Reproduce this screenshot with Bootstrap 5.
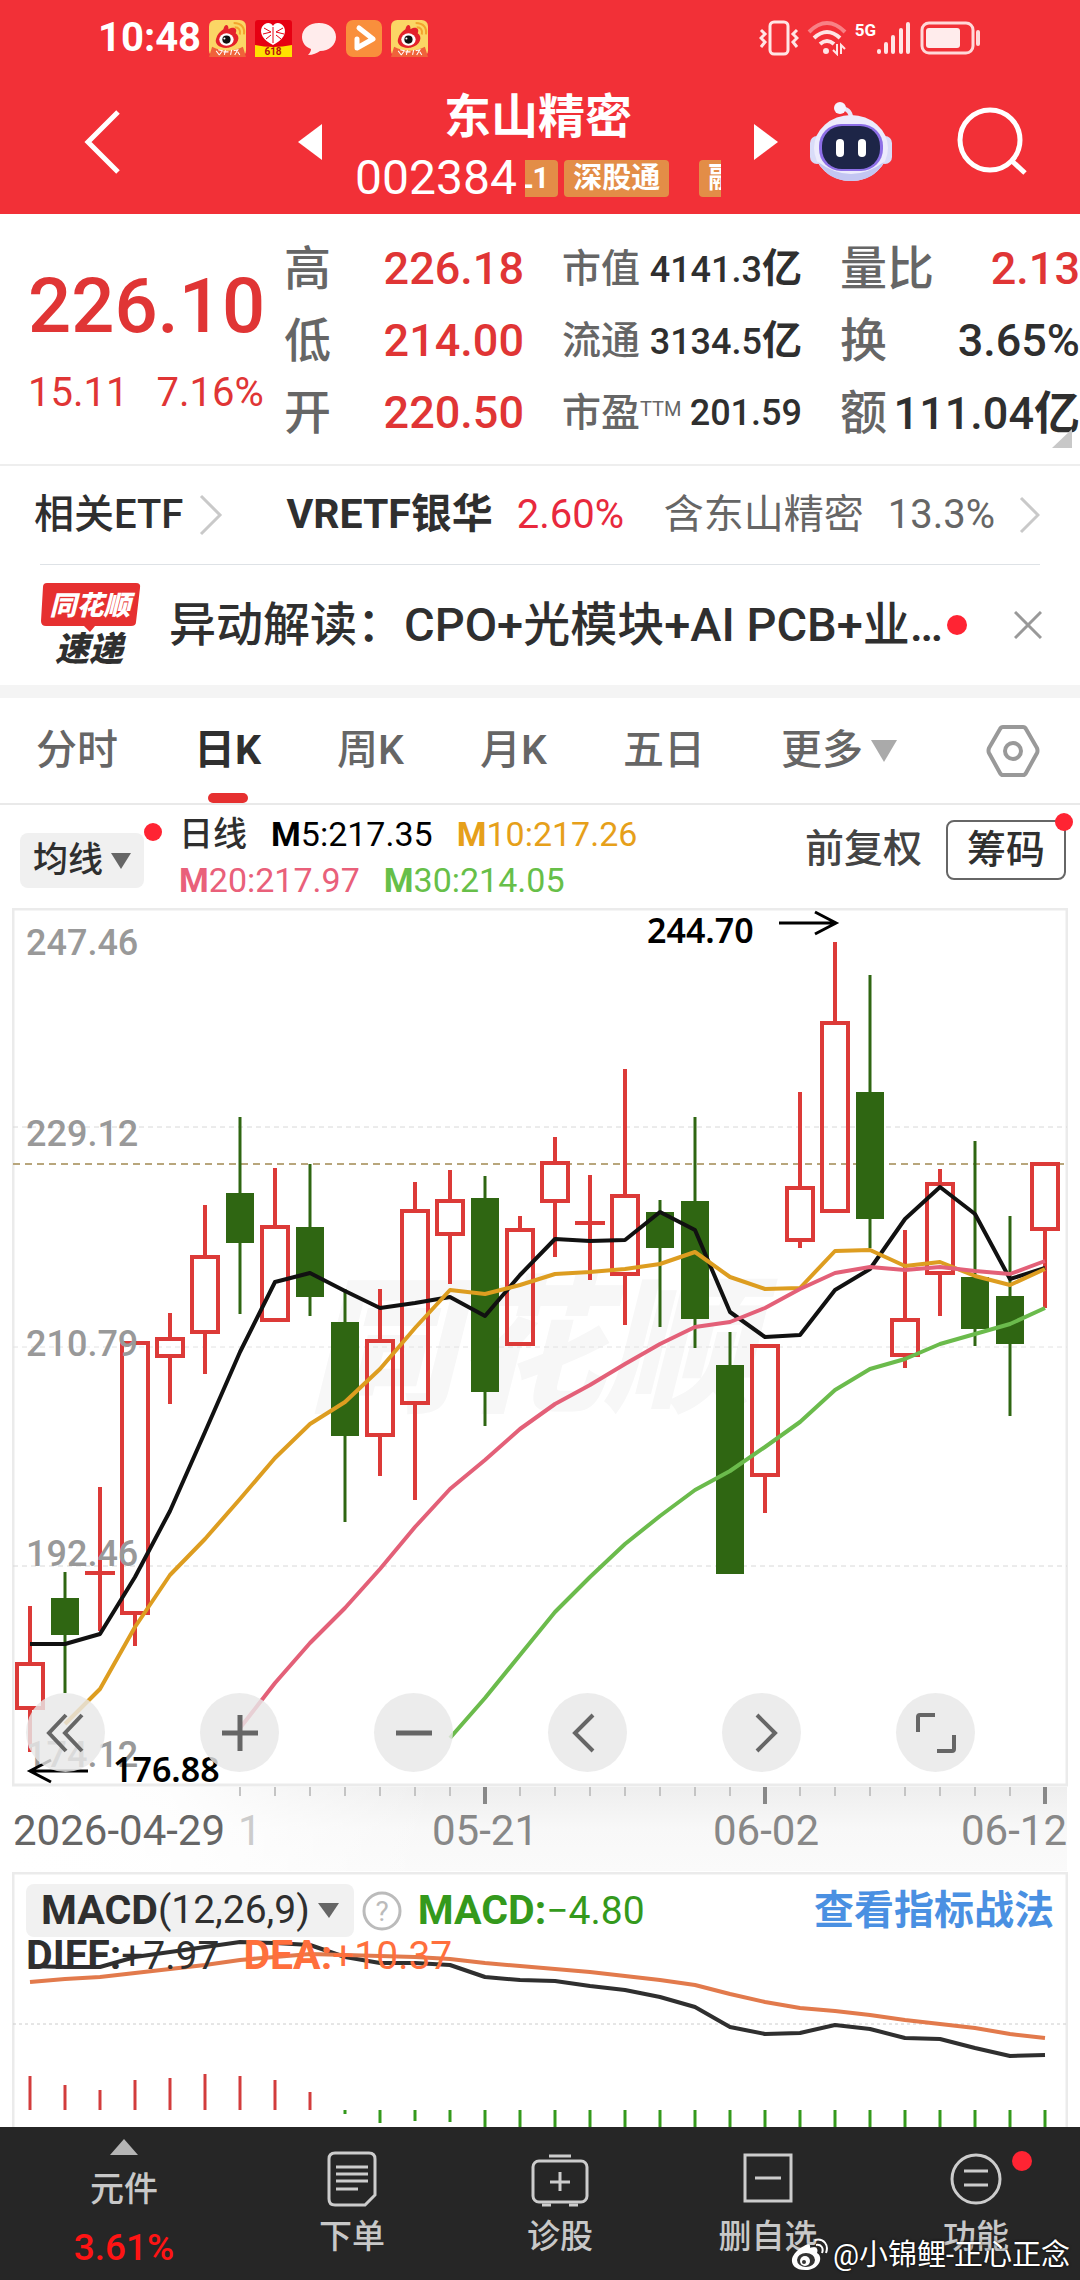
<!DOCTYPE html>
<html lang="zh-CN">
<head>
<meta charset="utf-8">
<meta name="viewport" content="width=device-width, initial-scale=1">
<title>东山精密 002384</title>
<link rel="stylesheet" href="https://cdn.jsdelivr.net/npm/bootstrap@5.3.0/dist/css/bootstrap.min.css">
<style>
:root{--up:#e03535;--ink:#2f2f2f;--dim:#666;--brand:#f23037}
body{font-family:Roboto,"Noto Sans CJK SC",sans-serif;color:var(--ink);background:#fff;line-height:1.2;overflow-x:hidden}
button{border:0;background:none;padding:0;color:inherit;font:inherit}
a{color:inherit;text-decoration:none}
svg{display:block;flex:none}
.up{color:var(--up)}.dim{color:var(--dim)}
.fw-5{font-weight:500}
.topbar{background:var(--brand);color:#fff}
.status{height:76px;padding:0 98px 0 98px;font-size:40px;font-weight:700;line-height:76px}
.status-apps{gap:9px}
.net5g{font-size:17px;line-height:18px;font-weight:700;height:34px}
.titlebar{height:138px;padding:0 52px 6px 82px}
.title-text{padding-top:16px}
.stock-title{font-size:47px;line-height:56px;font-weight:700}
.stock-code{font-size:48px;line-height:66px}
.tag-strip{width:196px;height:37px;gap:6px;overflow:hidden}
.tag{background:#e38d47;border-radius:4px;font-size:29px;line-height:37px;font-weight:700;padding:0 9px;flex:none}
.tag-cut{margin-left:-17px}
.pager{width:480px;margin-left:auto;margin-right:32px}
.robot{margin-right:64px}
.quote{display:grid;grid-template-columns:256fr 278fr 278fr 240fr;padding:19px 0 15px 28px;border-bottom:2px solid #eee}
.quote dl{margin:0;padding-right:38px}
.quote dl:last-of-type{padding-right:0}
.quote dl>div{height:72px;line-height:72px}
.quote dt{font-weight:500;color:var(--dim)}
.quote dd{margin:0;font-weight:500}
.c-lg{font-size:47px}.c-lg dd{font-size:45px}
.c-md{font-size:39px}.c-md dd{font-size:36px}
.price-cell{padding-top:28px}
.price{font-size:76px;line-height:90px;font-weight:500}
.change{font-size:40px;line-height:52px;gap:28px}
.unit{font-weight:700;font-size:40px}
.c-end .unit{font-size:46px}
.etf{height:98px;font-size:40px;padding:0 40px 0 34px}
.etf-name{margin-left:63px;font-weight:700;font-size:41px}
.news{height:120px;padding:0 38px 0 40px}
.headline{font-size:47px;font-weight:500;padding-left:3px}
.reddot{width:20px;height:20px;border-radius:50%;background:#ff2433;display:block;flex:none}
.strip{height:13px;background:#f4f4f4}
.tabs{height:107px;padding:0 40px 0 36px;border-bottom:2px solid #e9e9e9;font-size:41px;color:var(--dim);gap:76px;font-weight:500}
.tabs button{height:104px;position:relative}
.tabs .on{font-weight:700;color:var(--ink)}
.tabs .on::after{content:"";position:absolute;left:50%;bottom:0;width:40px;height:10px;margin-left:-20px;border-radius:5px;background:#e63030}
.ma{height:103px;padding:0 14px 0 20px}
.ma-btn{background:#f0f0f0;border-radius:8px;height:55px;padding:0 13px;font-size:35px;font-weight:500}
.ma-list{font-size:34px;line-height:46px;margin-left:35px}
.ma-right{padding-bottom:14px}
.adjust{font-size:39px;font-weight:500;color:#444}
.chip-btn{border:2px solid #666;border-radius:8px;height:60px;width:120px;font-size:39px;font-weight:500;line-height:54px}
.dot-corner{position:absolute;right:-9px;top:-9px;width:18px;height:18px}
.dot-left{right:-18px;top:-10px}
.plot{margin:0 12px;position:relative}
.plot svg.chart{width:100%;height:auto}
.tools{position:absolute;left:14px;right:93px;top:785px}
.round{width:79px;height:79px;border-radius:50%;background:rgba(232,232,232,.82);display:flex;align-items:center;justify-content:center}
.macd-head{position:absolute;left:14px;right:14px;top:12px}
.macd-btn{background:#f1f1f1;border-radius:8px;height:53px;padding:0 15px}
.m-name{font-weight:700;font-size:41px}
.m-num{font-size:39px}
.m-link{font-weight:700;font-size:40px;color:#4a90e2}
.m-line{line-height:36px}
.green{color:#34991c}.orange{color:#ff6f3c}
.dock{background:#262626;color:#c8c8c8;height:153px;font-size:34px;position:relative}
.dock button{flex:208 1 0;padding-top:24px;font-weight:500;font-size:33px;line-height:44px;position:relative}
.dock .sector{flex:248 1 0;padding-top:12px;font-size:34px}
.sector-pct{color:#ff1414;font-size:37px;line-height:50px}
.dock-dot{position:absolute;right:48px;top:24px}
.credit{position:absolute;right:10px;bottom:7px;color:#fff;font-size:29px;line-height:36px;text-shadow:0 0 3px #000}
</style>
<script src="https://cdn.jsdelivr.net/npm/bootstrap@5.3.0/dist/js/bootstrap.bundle.min.js"></script>
</head>
<body>
<svg width="0" height="0" class="position-absolute" aria-hidden="true">
  <symbol id="weibo" viewBox="0 0 36 36">
    <rect width="36" height="36" rx="6" fill="#fbd665"/>
    <path d="M3 26Q18 34 33 26L36 36H0z" fill="#f0623a"/>
    <path d="M14 9c1-5 5-6 5 0 5-3 9-1 7 4 5 3 3 12-7 14-9 1-14-4-12-9 1-4 4-7 7-9z" fill="#e4222b"/>
    <ellipse cx="17" cy="19" rx="7" ry="6" fill="#fff"/><circle cx="17" cy="19" r="4" fill="#111"/><circle cx="15" cy="18" r="1" fill="#fff"/>
    <path d="M25 7c4 0 6 3 5 7M24 3c8 0 11 5 10 11" fill="none" stroke="#f3a32d" stroke-width="2"/>
    <path d="M7 30l3 4M9 29l4 1-3 4M16 29l-1 5M14 31h5M22 29l-1 5M24 30l4-1-3 5M28 31l2 3" stroke="#fff" stroke-width="1" fill="none"/>
  </symbol>
</svg>

<header class="topbar">
  <div class="status d-flex align-items-center">
    <span class="me-2">10:48</span>
    <div class="status-apps d-flex align-items-center">
      <svg width="37" height="37"><use href="#weibo"/></svg>
      <svg width="37" height="37" viewBox="0 0 37 37"><rect width="37" height="37" rx="3" fill="#e60012"/><path d="M0 25Q18 29 37 25V37H0z" fill="#ffe100"/><path d="M18 25C8 20 4 13 7 7c3-5 9-5 11-1 2-4 8-4 11 1 3 6-1 13-11 18z" fill="#fff"/><path d="M9 8l7 4M8 14l8-2M11 19l5-4M28 8l-7 4M29 14l-8-2M26 19l-5-4M18 7v16" stroke="#e60012" stroke-width="1"/><text x="18" y="35" font-size="10" font-weight="700" text-anchor="middle" fill="#b31010">618</text></svg>
      <svg width="36" height="37" viewBox="0 0 36 37"><path d="M18 3c10 0 17 6 17 14s-7 14-16 14c-3 2-7 4-12 4 2-2 3-4 3-6C4 27 1 22 1 17 1 9 8 3 18 3z" fill="#ffecec"/></svg>
      <svg width="36" height="37" viewBox="0 0 36 37"><rect width="36" height="37" rx="7" fill="#f98f3c"/><path d="M11 19v9l16-9L13 8" fill="none" stroke="#fff" stroke-width="5" stroke-linejoin="round" stroke-linecap="round"/></svg>
      <svg width="37" height="37"><use href="#weibo"/></svg>
    </div>
    <div class="d-flex align-items-center ms-auto">
      <svg width="40" height="36" viewBox="0 0 40 36" fill="none" stroke="#ffe5e5" stroke-width="3"><rect x="11" y="2" width="18" height="32" rx="4"/><path d="M2 10l4 4-4 4 4 4-4 5M38 10l-4 4 4 4-4 4 4 5"/></svg>
      <svg class="ms-2" width="40" height="36" viewBox="0 0 40 36" fill="none" stroke="#ffe5e5" stroke-width="4"><path d="M2 12Q20-6 38 12" stroke-opacity=".45"/><path d="M7 18Q20 6 33 18M13 24q7-6 14 0"/><circle cx="19" cy="31" r="2" fill="#ffe5e5" stroke-width="2"/><path d="M30 24v10l-4-4M34 34V25l4 4" stroke-width="2"/></svg>
      <span class="net5g ms-2">5G</span>
      <svg width="36" height="34" viewBox="0 0 36 34" stroke="#ffe5e5" stroke-width="4" stroke-linecap="round"><path d="M3 31v-1M10 31v-8M17 31v-15M25 31V9M32 31V3"/></svg>
      <svg class="ms-2" width="62" height="34" viewBox="0 0 62 34"><rect x="2" y="2" width="51" height="30" rx="7" fill="none" stroke="#ffd9d9" stroke-width="3"/><rect x="6" y="7" width="34" height="20" rx="3" fill="#ffecec"/><path d="M58 11v12" stroke="#ffd9d9" stroke-width="4" stroke-linecap="round"/></svg>
    </div>
  </div>
  <div class="titlebar d-flex align-items-center">
    <button aria-label="返回"><svg width="40" height="66" viewBox="0 0 40 66"><path d="M36 3L6 33l30 30" fill="none" stroke="#fff" stroke-width="5"/></svg></button>
    <div class="pager d-flex align-items-center justify-content-between">
      <button aria-label="上一只"><svg width="24" height="36"><path d="M0 18L24 0v36z" fill="#fff"/></svg></button>
      <div class="title-text text-center">
        <div class="stock-title">东山精密</div>
        <div class="d-flex align-items-center gap-2"><span class="stock-code">002384</span>
          <div class="tag-strip d-flex"><span class="tag tag-cut">L1</span><span class="tag">深股通</span><span class="tag ms-4">融</span></div></div>
      </div>
      <button aria-label="下一只"><svg width="24" height="36"><path d="M24 18L0 0v36z" fill="#fff"/></svg></button>
    </div>
    <button class="robot" aria-label="智能助手"><svg width="82" height="80" viewBox="0 0 82 80">
      <path d="M41 18Q42 8 32 6" fill="none" stroke="#e8e6fa" stroke-width="4"/><circle cx="30" cy="6" r="6" fill="#f5f3ff"/>
      <rect x="0" y="34" width="14" height="28" rx="7" fill="#d9dcf8"/><rect x="68" y="34" width="14" height="28" rx="7" fill="#d9dcf8"/>
      <ellipse cx="41" cy="46" rx="37" ry="33" fill="#ecebfc"/><path d="M8 60Q41 84 74 60Q64 79 41 79 18 79 8 60z" fill="#c3c6f2"/>
      <rect x="9" y="22" width="64" height="47" rx="22" fill="#8d6fe6"/><rect x="12" y="24" width="58" height="43" rx="20" fill="#1d2547"/>
      <rect x="26" y="37" width="8" height="18" rx="4" fill="#fff"/><rect x="48" y="37" width="8" height="18" rx="4" fill="#fff"/></svg></button>
    <button aria-label="搜索"><svg width="72" height="72" viewBox="0 0 72 72" fill="none" stroke="#fff" stroke-width="5"><circle cx="34" cy="34" r="30"/><path d="M56 55l13 12"/></svg></button>
  </div>
</header>

<section class="quote position-relative">
  <div class="price-cell up">
    <div class="price">226.10</div>
    <div class="change d-flex mt-3"><span>15.11</span><span>7.16%</span></div>
  </div>
  <dl class="c-lg">
    <div class="d-flex justify-content-between"><dt>高</dt><dd class="up">226.18</dd></div>
    <div class="d-flex justify-content-between"><dt>低</dt><dd class="up">214.00</dd></div>
    <div class="d-flex justify-content-between"><dt>开</dt><dd class="up">220.50</dd></div>
  </dl>
  <dl class="c-md">
    <div class="d-flex justify-content-between"><dt>市值</dt><dd>4141.3<span class="unit">亿</span></dd></div>
    <div class="d-flex justify-content-between"><dt>流通</dt><dd>3134.5<span class="unit">亿</span></dd></div>
    <div class="d-flex justify-content-between"><dt>市盈<sup class="fs-5 fw-normal">TTM</sup></dt><dd>201.59</dd></div>
  </dl>
  <dl class="c-lg c-end">
    <div class="d-flex justify-content-between"><dt>量比</dt><dd class="up">2.13</dd></div>
    <div class="d-flex justify-content-between"><dt>换</dt><dd>3.65%</dd></div>
    <div class="d-flex justify-content-between"><dt>额</dt><dd>111.04<span class="unit">亿</span></dd></div>
  </dl>
  <svg class="position-absolute bottom-0 end-0 me-2 mb-3" width="20" height="19"><path d="M20 0v19H0z" fill="#c8c8c8"/></svg>
</section>

<a href="#" class="etf d-flex align-items-center">
  <span class="fw-5">相关ETF</span>
  <svg class="ms-3" width="24" height="42" viewBox="0 0 24 42"><path d="M2 2l19 19L2 40" fill="none" stroke="#c9c9c9" stroke-width="3"/></svg>
  <span class="etf-name">VRETF银华</span><span class="ms-4" style="color:#e8293d">2.60%</span>
  <span class="dim ms-auto">含东山精密</span><span class="dim ms-4">13.3%</span>
  <svg class="ms-4" width="21" height="38" viewBox="0 0 21 38"><path d="M2 2l17 17L2 36" fill="none" stroke="#c9c9c9" stroke-width="3"/></svg>
</a>
<div class="px-4 mx-3"><div class="border-top"></div></div>
<div class="news d-flex align-items-center">
  <svg width="102" height="84" viewBox="0 0 102 84"><path d="M7 0h89q5 0 4 5l-4 34q0 4-5 4H55l-5 6-6-6H6q-5 0-5-5L3 4q0-4 4-4z" fill="#e63030"/><text x="50" y="32" font-size="27" font-weight="900" font-style="italic" text-anchor="middle" fill="#fff">同花顺</text><text x="49" y="78" font-size="34" font-weight="900" font-style="italic" text-anchor="middle" fill="#2f2f2f">速递</text></svg>
  <span class="headline ms-4 text-truncate">异动解读：CPO+光模块+AI PCB+业…</span>
  <span class="reddot ms-1"></span>
  <button class="ms-auto" aria-label="关闭"><svg width="28" height="28"><path d="M1 1l26 26M27 1L1 27" stroke="#999" stroke-width="3"/></svg></button>
</div>
<div class="strip"></div>

<nav class="tabs d-flex align-items-center">
  <button>分时</button><button class="on">日K</button><button>周K</button><button>月K</button><button>五日</button>
  <button class="d-flex align-items-center">更多<svg class="ms-2" width="26" height="22"><path d="M0 0h26L13 22z" fill="#aaa"/></svg></button>
  <button class="ms-auto" aria-label="设置"><svg width="54" height="54" viewBox="0 0 54 54" fill="none" stroke="#999" stroke-width="4"><path d="M17 3h20q2 0 3 2l11 19q1 3 0 5L40 49q-1 2-3 2H17q-2 0-3-2L3 29q-1-2 0-5L14 5q1-2 3-2z"/><circle cx="27" cy="27" r="8"/></svg></button>
</nav>

<div class="ma d-flex align-items-center">
  <button class="ma-btn d-flex align-items-center position-relative mt-2">均线<svg class="ms-2" width="20" height="16"><path d="M0 0h20L10 16z" fill="#666"/></svg><span class="reddot dot-corner dot-left"></span></button>
  <div class="ma-list">
    <div class="d-flex gap-4"><span class="fw-5">日线</span><span class="text-black"><b>M</b>5:217.35</span><span style="color:#e6a01a"><b>M</b>10:217.26</span></div>
    <div class="d-flex gap-4"><span style="color:#e9607a"><b>M</b>20:217.97</span><span style="color:#67bf49"><b>M</b>30:214.05</span></div>
  </div>
  <div class="ma-right d-flex align-items-center ms-auto">
    <button class="adjust me-4">前复权</button>
    <button class="chip-btn position-relative">筹码<span class="reddot dot-corner"></span></button>
  </div>
</div>

<section class="plot">
  <svg class="chart" id="kline" viewBox="12 908 1056 964" font-family="Roboto,'Noto Sans CJK SC',sans-serif"></svg>
  <div class="tools d-flex justify-content-between">
    <button class="round" aria-label="最早"><svg width="40" height="40" fill="none" stroke="#666" stroke-width="4"><path d="M20 2L3 20l17 18M36 2L19 20l17 18"/></svg></button>
    <button class="round" aria-label="放大"><svg width="38" height="38" stroke="#666" stroke-width="5"><path d="M19 1v36M1 19h36"/></svg></button>
    <button class="round" aria-label="缩小"><svg width="38" height="38" stroke="#666" stroke-width="5"><path d="M1 19h36"/></svg></button>
    <button class="round" aria-label="左移"><svg width="40" height="40" fill="none" stroke="#666" stroke-width="4"><path d="M25 2L7 20l18 18"/></svg></button>
    <button class="round" aria-label="右移"><svg width="40" height="40" fill="none" stroke="#666" stroke-width="4"><path d="M15 2l18 18-18 18"/></svg></button>
    <button class="round" aria-label="全屏"><svg width="42" height="42" fill="none" stroke="#666" stroke-width="4"><path d="M3 20V5q0-2 2-2h15M39 23v14q0 2-2 2H22"/></svg></button>
  </div>
</section>

<section class="plot">
  <svg class="chart" id="macd" viewBox="12 1872 1056 255"></svg>
  <div class="macd-head">
    <div class="d-flex align-items-center">
      <button class="macd-btn d-flex align-items-center"><span class="m-name">MACD</span><span class="m-num">(12,26,9)</span><svg class="ms-2" width="21" height="15"><path d="M0 0h21L11 15z" fill="#666"/></svg></button>
      <button class="ms-2" aria-label="帮助"><svg width="40" height="40" fill="none"><circle cx="20" cy="20" r="18" stroke="#bbb" stroke-width="3"/><text x="20" y="30" font-size="28" text-anchor="middle" fill="#bbb">?</text></svg></button>
      <span class="green ms-3"><span class="m-name">MACD:</span><span class="m-num">−4.80</span></span>
      <a href="#" class="m-link ms-auto">查看指标战法</a>
    </div>
    <div class="m-line d-flex gap-4"><span><span class="m-name">DIFF:</span><span class="m-num">+7.97</span></span><span class="orange"><span class="m-name">DEA:</span><span class="m-num">+10.37</span></span></div>
  </div>
</section>

<nav class="dock d-flex align-items-start">
  <button class="sector d-flex flex-column align-items-center"><svg width="28" height="16"><path d="M14 0l14 16H0z" fill="#b5b5b5"/></svg><span class="mt-2 pt-1">元件</span><span class="sector-pct mt-2 pt-1">3.61%</span></button>
  <button class="d-flex flex-column align-items-center"><svg width="50" height="56" viewBox="0 0 50 56" fill="none" stroke="#ccc" stroke-width="3"><path d="M8 2h34q6 0 6 6v36L38 54H8q-6 0-6-6V8q0-6 6-6zM9 16h32M9 23h32M9 30h32M9 38h22"/></svg><span class="pt-2">下单</span></button>
  <button class="d-flex flex-column align-items-center"><svg width="58" height="56" viewBox="0 0 58 56" fill="none" stroke="#ccc" stroke-width="3"><rect x="2" y="10" width="54" height="41" rx="6"/><path d="M18 5h22M11 54h9M38 54h9M29 21v19M19 31h20"/></svg><span class="pt-2">诊股</span></button>
  <button class="d-flex flex-column align-items-center"><svg width="50" height="56" viewBox="0 0 50 56" fill="none" stroke="#ccc" stroke-width="3"><path d="M2 4h46v46H2zM12 27h26"/></svg><span class="pt-2">删自选</span></button>
  <button class="d-flex flex-column align-items-center"><svg width="56" height="56" viewBox="0 0 56 56" fill="none" stroke="#ccc" stroke-width="3"><circle cx="28" cy="28" r="24"/><path d="M16 20h24M16 34h24"/></svg><span class="pt-2">功能</span><span class="reddot dock-dot"></span></button>
  <div class="credit d-flex align-items-center"><svg class="me-1" width="38" height="36" viewBox="0 0 38 36"><path d="M13 9c4-3 7-2 6 2 5-2 9 0 7 5 6 3 4 15-9 17C5 34 0 28 1 22 2 17 8 11 13 9z" fill="#fff"/><ellipse cx="15" cy="23" rx="9" ry="7" fill="#333"/><circle cx="14" cy="24" r="5" fill="#fff"/><circle cx="13" cy="25" r="2" fill="#333"/><path d="M25 8c5-1 8 3 6 8M24 3c9-2 14 5 11 13" fill="none" stroke="#fff" stroke-width="2"/></svg><span>@小锦鲤-正心正念</span></div>
</nav>

<script>
// Candles: high, body top, body bottom, low, direction (1 = rise, 0 = fall)
const candles=[[1606,1664,1708,1752,1],[1572,1598,1635,1693,0],[1487,1573,1573,1631,1],[1343,1343,1613,1646,1],[1313,1339,1356,1404,1],[1205,1257,1332,1374,1],[1117,1193,1243,1314,0],[1168,1227,1320,1320,1],[1164,1227,1297,1316,0],[1289,1322,1436,1522,0],[1289,1341,1435,1476,1],[1182,1211,1403,1500,1],[1170,1201,1234,1284,1],[1176,1198,1392,1426,0],[1216,1230,1344,1344,1],[1137,1163,1201,1257,1],[1175,1223,1223,1280,1],[1069,1196,1274,1325,1],[1200,1212,1248,1327,0],[1117,1201,1319,1348,0],[1332,1365,1574,1574,0],[1346,1346,1475,1513,1],[1092,1188,1240,1248,1],[942,1023,1211,1211,1],[975,1092,1219,1248,0],[1230,1320,1355,1368,1],[1169,1184,1273,1316,1],[1141,1277,1329,1346,0],[1216,1296,1344,1416,0],[1164,1164,1229,1308,1]];
const ma5=[1644,1644,1634,1577,1511,1432,1352,1282,1273,1291,1308,1303,1297,1316,1275,1239,1241,1240,1212,1230,1312,1337,1335,1290,1269,1219,1187,1214,1279,1268];
const ma10=[1724,1689,1627,1575,1539,1499,1458,1424,1402,1369,1328,1290,1294,1285,1274,1272,1269,1264,1252,1277,1289,1288,1251,1250,1266,1262,1276,1285,1269];
const ma20=[1728,1683,1643,1608,1569,1527,1489,1460,1429,1404,1385,1364,1344,1327,1322,1308,1289,1273,1267,1270,1267,1271,1274,1261];
const ma30=[1738,1698,1655,1612,1577,1544,1516,1490,1471,1447,1422,1390,1369,1359,1344,1334,1324,1308];
const diff=[1966,1967,1967,1957,1952,1947,1942,1943,1945,1957,1963,1963,1965,1977,1980,1981,1986,1990,1997,2007,2027,2034,2033,2025,2029,2038,2039,2048,2056,2055];
const dea=[1982,1979,1977,1973,1969,1965,1960,1957,1954,1955,1956,1957,1959,1963,1966,1969,1972,1976,1980,1985,1994,2002,2008,2011,2015,2020,2024,2028,2034,2038];
const hist=[2076,2085,2090,2080,2078,2074,2076,2080,2092,2114,2123,2121,2122];
const X=i=>30+35*i;
const RED='#dc3a38',GREEN='#2f6612';
const line=(a,s,c,w=4)=>`<polyline points="${a.map((y,i)=>X(i+s)+','+y).join(' ')}" fill="none" stroke="${c}" stroke-width="${w}" stroke-linejoin="round"/>`;
const dash=(y,c,d,w)=>`<path d="M13 ${y}H1067" stroke="${c}" stroke-width="${w}" stroke-dasharray="${d}"/>`;
const label=(x,y,t,f)=>`<text x="${x}" y="${y}" fill="${f}" font-size="36" font-weight="500">${t}</text>`;
let k=`<defs><linearGradient id="fade" x1="0" x2="0" y1="0" y2="1"><stop offset="0" stop-color="#eeeeee"/><stop offset=".5" stop-color="#f8f8f8"/><stop offset="1" stop-color="#fafafa"/></linearGradient><linearGradient id="veil"><stop offset="0" stop-color="#fff"/><stop offset=".15" stop-color="#fff" stop-opacity=".9"/><stop offset=".4" stop-color="#fff" stop-opacity="0"/></linearGradient></defs>
<rect x="13" y="909" width="1054" height="876" fill="#fff" stroke="#ebebeb" stroke-width="3"/>
<rect x="13" y="1787" width="1054" height="84" fill="url(#fade)"/><rect x="13" y="1787" width="1054" height="84" fill="url(#veil)"/>
<text x="308" y="1400" font-size="148" font-weight="900" font-style="italic" fill="#f7f7f7">同花顺</text>`;
k+=dash(1127,'#d8d8d8','5 4',1)+dash(1347,'#e2e2e2','5 4',1)+dash(1566,'#d8d8d8','5 4',1)+dash(1164,'#b8a67c','7 5',2);
candles.forEach(([h,t,b,l,up],i)=>{const x=X(i);
 if(!up)k+=`<path d="M${x} ${h}V${l}" stroke="${GREEN}" stroke-width="3"/><rect x="${x-14}" y="${t}" width="28" height="${b-t}" fill="${GREEN}"/>`;
 else if(t===b)k+=`<path d="M${x} ${h}V${l}M${x-15} ${t}h30" stroke="${RED}" stroke-width="4" fill="none"/>`;
 else k+=`<path d="M${x} ${h}V${t}M${x} ${b}V${l}M${x-13} ${t}h26V${b}h-26z" stroke="${RED}" stroke-width="4" fill="none"/>`;});
k+=line(ma5,0,'#111')+line(ma10,1,'#dd9d20')+line(ma20,6,'#e36078')+line(ma30,12,'#6bbb4c');
[['247.46',955],['229.12',1146],['210.79',1356],['192.46',1566],['174.12',1767]].forEach(([t,y])=>k+=label(26,y,t,'#999'));
k+=`<g font-family="'Noto Sans',sans-serif" font-weight="600" font-size="34"><text x="647" y="943">244.70</text><text x="113" y="1782">176.88</text></g>
<path d="M779 923h56M815 912l21 11-21 11M88 1771H31M51 1760l-21 11 21 11" fill="none" stroke="#000" stroke-width="3"/>`;
for(let i=6;i<30;i++){const big=(i-13)%8===0;k+=`<path d="M${X(i)} 1787v${big?17:9}" stroke="${big?'#888':'#c4c4c4'}" stroke-width="${big?4:2}"/>`;}
k+=`<g font-size="42"><text x="13" y="1845" fill="#666">2026-04-29</text><text x="238" y="1845" fill="#ccc">1</text><g fill="#888"><text x="485" y="1845" text-anchor="middle">05-21</text><text x="766" y="1845" text-anchor="middle">06-02</text><text x="1067" y="1845" text-anchor="end">06-12</text></g></g>`;
document.getElementById('kline').innerHTML=k;
let m=`<path d="M13 2127V1873H1067V2127" fill="#fff" stroke="#ebebeb" stroke-width="3"/>`+dash(2024,'#ccc','3 3',1);
for(let i=0;i<30;i++)m+=`<path d="M${X(i)} 2110V${hist[i]||2127}" stroke="${i<9?'#d23c3c':'#34991c'}" stroke-width="3"/>`;
m+=line(diff,0,'#2f2f2f')+line(dea,0,'#e27a4c');
document.getElementById('macd').innerHTML=m;
</script>
</body>
</html>
